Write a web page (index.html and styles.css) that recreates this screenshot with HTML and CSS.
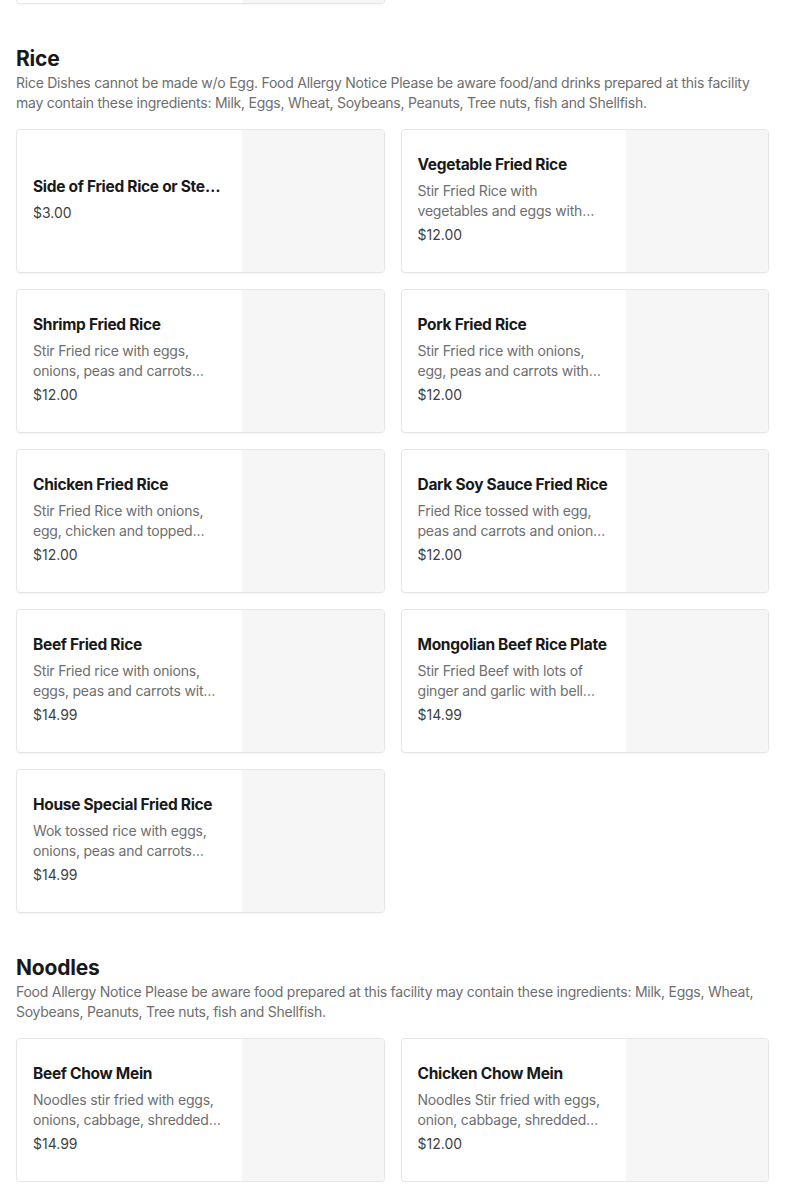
FILE: index.html
```html
<!DOCTYPE html>
<html lang="en">
<head>
<meta charset="utf-8">
<title>Menu</title>
<link rel="stylesheet" href="styles.css">
</head>
<body>
<div class="page">
  <section class="section prev">
    <div class="grid">
      <div class="card"><div class="info"></div><div class="thumb"></div></div>
    </div>
  </section>

  <section class="section">
    <h2 class="heading">Rice</h2>
    <p class="desc">Rice Dishes cannot be made w/o Egg. Food Allergy Notice Please be aware food/and drinks prepared at this facility may contain these ingredients: Milk, Eggs, Wheat, Soybeans, Peanuts, Tree nuts, fish and Shellfish.</p>
    <div class="grid">
      <div class="card"><div class="info"><div class="name">Side of Fried Rice or Steamed Rice</div><div class="price">$3.00</div></div><div class="thumb"></div></div>
      <div class="card"><div class="info"><div class="name">Vegetable Fried Rice</div><div class="text">Stir Fried Rice with vegetables and eggs with soy sauce</div><div class="price">$12.00</div></div><div class="thumb"></div></div>
      <div class="card"><div class="info"><div class="name">Shrimp Fried Rice</div><div class="text">Stir Fried rice with eggs, onions, peas and carrots with shrimp</div><div class="price">$12.00</div></div><div class="thumb"></div></div>
      <div class="card"><div class="info"><div class="name">Pork Fried Rice</div><div class="text">Stir Fried rice with onions, egg, peas and carrots with pork</div><div class="price">$12.00</div></div><div class="thumb"></div></div>
      <div class="card"><div class="info"><div class="name">Chicken Fried Rice</div><div class="text">Stir Fried Rice with onions, egg, chicken and topped with green onions</div><div class="price">$12.00</div></div><div class="thumb"></div></div>
      <div class="card"><div class="info"><div class="name">Dark Soy Sauce Fried Rice</div><div class="text">Fried Rice tossed with egg, peas and carrots and onions with dark soy sauce</div><div class="price">$12.00</div></div><div class="thumb"></div></div>
      <div class="card"><div class="info"><div class="name">Beef Fried Rice</div><div class="text">Stir Fried rice with onions, eggs, peas and carrots with beef</div><div class="price">$14.99</div></div><div class="thumb"></div></div>
      <div class="card"><div class="info"><div class="name">Mongolian Beef Rice Plate</div><div class="text">Stir Fried Beef with lots of ginger and garlic with bell peppers and onions</div><div class="price">$14.99</div></div><div class="thumb"></div></div>
      <div class="card"><div class="info"><div class="name">House Special Fried Rice</div><div class="text">Wok tossed rice with eggs, onions, peas and carrots with shrimp, chicken and pork</div><div class="price">$14.99</div></div><div class="thumb"></div></div>
    </div>
  </section>

  <section class="section">
    <h2 class="heading">Noodles</h2>
    <p class="desc">Food Allergy Notice Please be aware food prepared at this facility may contain these ingredients: Milk, Eggs, Wheat, Soybeans, Peanuts, Tree nuts, fish and Shellfish.</p>
    <div class="grid">
      <div class="card"><div class="info"><div class="name">Beef Chow Mein</div><div class="text">Noodles stir fried with eggs, onions, cabbage, shredded carrots and beef</div><div class="price">$14.99</div></div><div class="thumb"></div></div>
      <div class="card"><div class="info"><div class="name">Chicken Chow Mein</div><div class="text">Noodles Stir fried with eggs, onion, cabbage, shredded carrots and chicken</div><div class="price">$12.00</div></div><div class="thumb"></div></div>
    </div>
  </section>
</div>
</body>
</html>
```

FILE: styles.css
```css
* { box-sizing: border-box; }
html, body { margin: 0; padding: 0; background: #fff; }
body {
  font-family: "Inter", "Lato", "Liberation Sans", sans-serif;
  color: #191919;
  overflow: hidden;
}
.page {
  padding: 0 16px;
  margin-top: -140px;
  display: flex;
  flex-direction: column;
  gap: 41px;
}
.section { display: flex; flex-direction: column; }
.heading {
  margin: 0;
  font-size: 21px;
  line-height: 28px;
  font-weight: 700;
  color: #191919;
  letter-spacing: -0.2px;
}
.desc {
  margin: 0 0 16px;
  font-size: 14px;
  line-height: 20px;
  color: #6e6e6e;
  letter-spacing: -0.25px;
}
.grid {
  display: grid;
  grid-template-columns: 1fr 1fr;
  gap: 16px;
}
.card {
  height: 144px;
  display: flex;
  border: 1px solid #e6e6e6;
  border-radius: 4px;
  box-shadow: 0 1px 2px rgba(0,0,0,0.04);
  overflow: hidden;
  background: #fff;
}
.info {
  flex: 1;
  min-width: 0;
  padding: 0 16px 4px 16px;
  display: flex;
  flex-direction: column;
  justify-content: center;
}
.thumb {
  width: 142px;
  flex: none;
  background: #f6f6f6;
}
.name {
  font-size: 15.5px;
  line-height: 24px;
  font-weight: 700;
  color: #191919;
  letter-spacing: -0.3px;
  white-space: nowrap;
  overflow: hidden;
  text-overflow: ellipsis;
}
.text {
  margin: 4px 4px 0 0;
  font-size: 14px;
  line-height: 20px;
  color: #6e6e6e;
  letter-spacing: -0.2px;
  display: -webkit-box;
  -webkit-line-clamp: 2;
  -webkit-box-orient: vertical;
  overflow: hidden;
}
.price {
  margin-top: 4px;
  font-size: 14px;
  line-height: 20px;
  color: #3f3f3f;
}
```
